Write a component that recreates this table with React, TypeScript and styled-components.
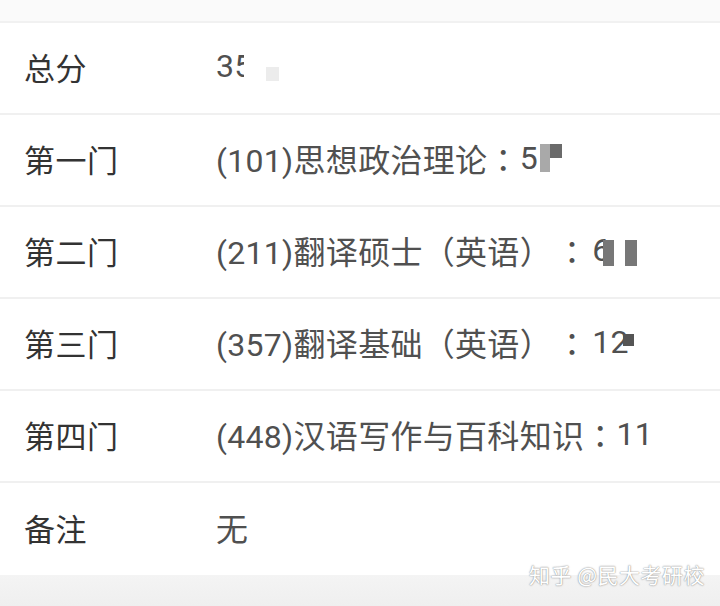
import React from 'react'
import styled, { createGlobalStyle } from 'styled-components'

const Global = createGlobalStyle`
  html, body {
    margin: 0;
    padding: 0;
    background: #f6f6f6;
  }
  body {
    font-family: Roboto, "Noto Sans CJK SC", sans-serif;
  }
`

const Page = styled.div`
  position: relative;
  width: 720px;
  height: 606px;
  overflow: hidden;
  background: #f9f9f9;
  display: flex;
  flex-direction: column;
`

const TopStrip = styled.div`
  height: 21px;
  background: #fafafa;
`

const Table = styled.div`
  display: flex;
  flex-direction: column;
  background: #fff;
  border-top: 2px solid #f1f1f1;
`

const Row = styled.div`
  height: 92px;
  display: flex;
  align-items: center;
  padding-bottom: 4px;
  box-sizing: border-box;
  border-bottom: 2px solid #f0f0f0;
  &:last-child {
    border-bottom: none;
  }
`

const Label = styled.div`
  width: 192px;
  padding-left: 24px;
  font-size: 31px;
  color: #333;
  letter-spacing: 0.5px;
`

const Value = styled.div`
  display: flex;
  align-items: center;
  font-size: 32px;
  color: #505050;
  letter-spacing: 0.3px;
`

const Colon = styled.span<{ $wide?: boolean }>`
  font-family: "Noto Sans CJK JP", sans-serif;
  margin: 0 ${p => (p.$wide ? 4 : 0)}px;
`

const Censor = styled.span<{ $w: number; $h: number; $c: string; $dy?: number }>`
  display: inline-block;
  width: ${p => p.$w}px;
  height: ${p => p.$h}px;
  background: ${p => p.$c};
  margin-top: ${p => p.$dy ?? 0}px;
`

const Bottom = styled.div`
  flex: 1;
  background: linear-gradient(#f4f4f4, #efefef);
`

const Watermark = styled.div`
  position: absolute;
  right: 15px;
  bottom: 17px;
  font-family: "Noto Sans CJK SC", sans-serif;
  font-size: 21px;
  color: #fff;
  text-shadow: 0 0 1px #888, 0 0 2px #aaa;
  letter-spacing: 0.5px;
`

export default function App() {
  return (
    <Page>
      <Global />
      <TopStrip />
      <Table>
        <Row>
          <Label>总分</Label>
          <Value>
            35
            <Censor $w={10} $h={24} $c="#fff" style={{ marginLeft: -9 }} />
            <Censor $w={13} $h={14} $c="#ececec" $dy={16} style={{ marginLeft: 12 }} />
          </Value>
        </Row>
        <Row>
          <Label>第一门</Label>
          <Value>
            (101)思想政治理论<Colon>：</Colon>5
            <Censor $w={10} $h={28} $c="#a9a9a9" style={{ marginLeft: 2 }} />
            <Censor $w={12} $h={14} $c="#6a6a6a" $dy={-14} />
          </Value>
        </Row>
        <Row>
          <Label>第二门</Label>
          <Value>
            (211)翻译硕士（英语）<Colon $wide>：</Colon>6
            <Censor $w={11} $h={26} $c="#777" $dy={6} style={{ marginLeft: -8 }} />
            <Censor $w={12} $h={26} $c="#777" $dy={6} style={{ marginLeft: 11 }} />
          </Value>
        </Row>
        <Row>
          <Label>第三门</Label>
          <Value>
            (357)翻译基础（英语）<Colon $wide>：</Colon>12
            <Censor $w={11} $h={12} $c="#555" $dy={-4} style={{ marginLeft: -6 }} />
          </Value>
        </Row>
        <Row>
          <Label>第四门</Label>
          <Value>(448)汉语写作与百科知识<Colon>：</Colon>11</Value>
        </Row>
        <Row>
          <Label>备注</Label>
          <Value>无</Value>
        </Row>
      </Table>
      <Bottom />
      <Watermark>知乎 @民大考研校</Watermark>
    </Page>
  )
}
